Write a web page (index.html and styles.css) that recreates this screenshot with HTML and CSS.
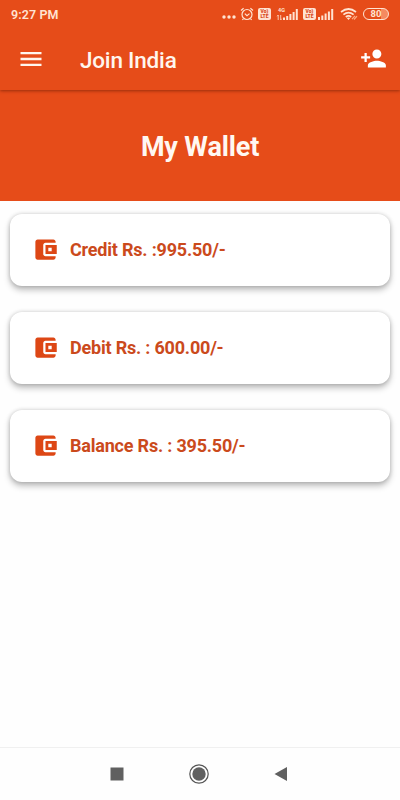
FILE: index.html
```html
<!DOCTYPE html>
<html lang="en">
<head>
<meta charset="utf-8">
<title>My Wallet</title>
<link rel="stylesheet" href="styles.css">
</head>
<body>
<svg class="defs" aria-hidden="true">
  <symbol id="wallet" viewBox="0 0 24 24"><path d="M21 18v1c0 1.100-.9 2-2 2H5c-1.110 0-2-.9-2-2V5c0-1.100.89-2 2-2h14c1.100 0 2 .9 2 2v1h-9c-1.110 0-2 .9-2 2v8c0 1.100.89 2 2 2h9zm-9-2h10V8H12v8zm2.500-2.500v-3h3v3h-3z" fill-rule="evenodd"/></symbol>
  <symbol id="signal" viewBox="0 0 16 12"><path d="M0 9h2v3H0zM3.300 7.500h2V12h-2zM6.600 5.500h2V12h-2zM9.900 3.500h2V12h-2zM13.200 1h2v11h-2z"/></symbol>
</svg>
<header class="top">
  <div class="status">
    <span class="time">9:27 PM</span>
    <div class="status-icons">
      <svg class="dots" viewBox="0 0 14 4"><circle cx="2" cy="2" r="1.700"/><circle cx="7" cy="2" r="1.700"/><circle cx="12" cy="2" r="1.700"/></svg>
      <svg class="alarm" viewBox="0 0 14 14"><circle cx="7" cy="7.500" r="5"/><path d="M1 3.500 3.600 1.300M13 3.500 10.400 1.300M4.800 6.600 7 8.600l2.500-2M3.400 11.800l-1 1.100M10.600 11.800l1 1.100"/></svg>
      <span class="volte"><span>Vo)</span><span>LTE</span></span>
      <svg class="network" viewBox="0 0 22 16"><text class="net-text" x="1" y="5.500">4G</text><path d="M1.200 9v5M.2 10.300l1-1.300M3.700 9v5l1-1.300" class="arrows"/><path d="M6 11.500h2V14H6zM9.200 10h2v4h-2zM12.400 8h2v6h-2zM15.600 6h2v8h-2zM18.800 3h2v11h-2z"/></svg>
      <span class="volte second"><span>Vo)</span><span>LTE</span></span>
      <svg class="signal"><use href="#signal"/></svg>
      <svg class="wifi" viewBox="0 0 18 14"><path d="M1 5q7.500-6 15 0M3.400 7.700q5.100-4.200 10.200 0M5.800 10q2.700-2.200 5.400 0"/><path class="wifi-dot" d="m6.800 11 1.700 2 1.700-2q-1.700-1.200-3.400 0z"/><path class="link" d="M12 12.200l3-3.400M14 12.500l3-3.400"/></svg>
      <span class="battery">80</span>
    </div>
  </div>
  <nav class="appbar">
    <svg class="menu" viewBox="0 0 24 24"><path d="M3 18h18v-2H3v2zm0-5h18v-2H3v2zm0-7v2h18V6H3z"/></svg>
    <span class="app-title">Join India</span>
    <svg class="person" viewBox="0 0 24 24"><path d="M15 12c2.210 0 4-1.790 4-4s-1.790-4-4-4-4 1.790-4 4 1.790 4 4 4zm-9-2V7H4v3H1v2h3v3h2v-3h3v-2H6zm9 4c-2.670 0-8 1.340-8 4v2h16v-2c0-2.660-5.330-4-8-4z"/></svg>
  </nav>
</header>
<main>
  <div class="hero"><h1>My Wallet</h1></div>
  <section class="cards">
    <div class="card"><svg class="wallet"><use href="#wallet"/></svg><span>Credit Rs. :995.50/-</span></div>
    <div class="card"><svg class="wallet"><use href="#wallet"/></svg><span>Debit Rs. : 600.00/-</span></div>
    <div class="card"><svg class="wallet"><use href="#wallet"/></svg><span>Balance Rs. : 395.50/-</span></div>
  </section>
</main>
<footer class="navbar">
  <svg viewBox="0 0 20 20"><path d="M3.500 3.500h13v13h-13z"/></svg>
  <svg viewBox="0 0 20 20"><circle cx="10" cy="10" r="9.200" class="ring"/><circle cx="10" cy="10" r="6.700"/></svg>
  <svg viewBox="0 0 20 20"><path d="M3.500 10 16 3v14z"/></svg>
</footer>
</body>
</html>
```

FILE: styles.css
```css
* { box-sizing: border-box; }
body {
  margin: 0;
  height: 800px;
  display: flex;
  flex-direction: column;
  background: #fefefe;
  font-family: Roboto, "Liberation Sans", sans-serif;
  overflow: hidden;
}
svg { display: block; flex: none; fill: currentColor; }
.defs { position: absolute; width: 0; height: 0; }
.top {
  position: relative;
  height: 90px;
  background: #e64c19;
  color: #fff6ee;
  box-shadow: 0 1px 3px rgba(90, 20, 0, .55);
}
.status {
  height: 28px;
  padding: 0 11px;
  display: flex;
  align-items: center;
  justify-content: space-between;
  color: #ffe3d2;
}
.time { font-size: 12.500px; font-weight: 600; letter-spacing: .1px; }
.status-icons { display: flex; align-items: center; }
.dots { width: 14px; height: 4px; margin: 6px 4px 0 0; }
.alarm { width: 14px; height: 14px; margin-right: 4px; fill: none; stroke: currentColor; stroke-width: 1.200; }
.volte {
  width: 13px;
  height: 12px;
  margin-right: 6px;
  padding-top: 1px;
  border-radius: 2px;
  background: #ffe3d2;
  color: #d94a1c;
  font-size: 5px;
  font-weight: 900;
  line-height: 5px;
  text-align: center;
}
.volte span { display: block; }
.volte.second { margin: 0 2px 0 4px; }
.network { width: 22px; height: 16px; margin-top: -1px; overflow: visible; }
.net-text { font-size: 5.500px; font-weight: 700; }
.arrows { fill: none; stroke: currentColor; stroke-width: .8; }
.signal { width: 16px; height: 12px; margin-right: 6px; }
.wifi { width: 18px; height: 14px; margin-right: 5px; fill: none; stroke: currentColor; stroke-width: 1.700; }
.wifi-dot { fill: currentColor; stroke: none; }
.link { stroke: #ffab83; stroke-width: 1.200; }
.battery {
  width: 26px;
  height: 12px;
  border: 1px solid currentColor;
  border-radius: 6px;
  background: linear-gradient(90deg, transparent 72%, #f58a60 72%);
  font-size: 9.500px;
  font-weight: 700;
  line-height: 10px;
  text-align: center;
}
.appbar {
  height: 61px;
  padding: 0 13px 0 17px;
  display: flex;
  align-items: center;
}
.menu { width: 28px; height: 28px; }
.app-title { margin-left: 35px; flex: 1; font-size: 22.500px; font-weight: 500; letter-spacing: -.2px; padding-top: 3px; }
.person { width: 27px; height: 27px; color: #fff; }
.hero {
  height: 111px;
  background: #e64c19;
  display: flex;
  align-items: center;
  justify-content: center;
  color: #fff8f2;
}
h1 { margin: 3px 0 0; font-size: 27px; font-weight: 700; letter-spacing: -.15px; }
main { flex: 1; }
.cards { padding: 13px 10px; display: flex; flex-direction: column; gap: 26px; }
.card {
  height: 72px;
  padding: 0 0 1px 22px;
  border-radius: 12px;
  background: #fff;
  box-shadow: 0 4px 6px rgba(0, 0, 0, .25), 0 0 4px rgba(0, 0, 0, .18);
  display: flex;
  align-items: center;
  gap: 11px;
  color: #cb4a1c;
  font-size: 18px;
  font-weight: 700;
  letter-spacing: -.2px;
}
.card span { padding-bottom: 1px; }
.wallet { width: 27px; height: 27px; color: #dd4715; }
.navbar {
  height: 53px;
  padding: 0 2px 1px 0;
  border-top: 1px solid #f0f0f0;
  display: flex;
  align-items: center;
  justify-content: center;
  gap: 62px;
  color: #606060;
}
.navbar svg { width: 20px; height: 20px; }
.ring { fill: none; stroke: #555; stroke-width: 1.200; }
```
